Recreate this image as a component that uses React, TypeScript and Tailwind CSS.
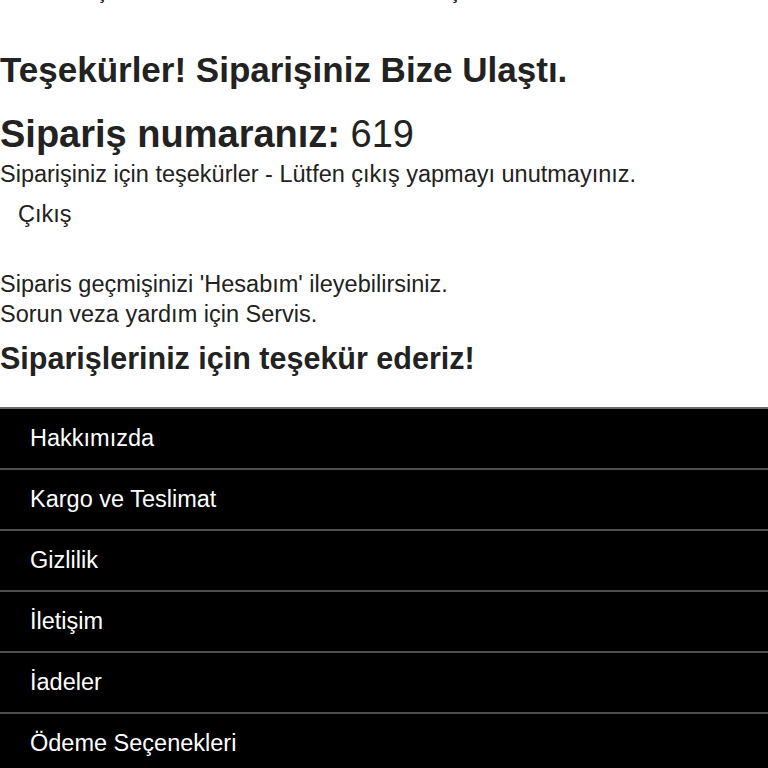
const links = ['Hakkımızda', 'Kargo ve Teslimat', 'Gizlilik', 'İletişim', 'İadeler', 'Ödeme Seçenekleri']

export default function App() {
  return (
    <div className="min-h-screen bg-white text-[#222] font-['Liberation_Sans',Arial,sans-serif]">
      {/* step bar, scrolled mostly out of view */}
      <div className="h-[7px] overflow-hidden">
        <div className="-mt-[17px] flex text-[18px] font-bold leading-[20px] text-[#222]">
          <span className="ml-[66px]">Giriş</span>
          <span className="ml-[308px]">Ödeş</span>
        </div>
      </div>

      <div className="pt-[43px]">
        <h1 className="text-[35px] font-bold leading-[40px]">Teşekürler! Siparişiniz Bize Ulaştı.</h1>

        <p className="mt-[22px] text-[38px] leading-[44px]">
          <span className="font-bold">Sipariş numaranız:</span> 619
        </p>
        <p className="mt-[4px] text-[23.5px] leading-[28px]">Siparişiniz için teşekürler - Lütfen çıkış yapmayı unutmayınız.</p>

        <button type="button" className="mt-[12px] ml-[18px] text-[23.5px] leading-[28px]">
          Çıkış
        </button>

        <div className="mt-[40px] text-[23.5px] leading-[30px]">
          <p>Siparis geçmişinizi 'Hesabım' ileyebilirsiniz.</p>
          <p>Sorun veza yardım için Servis.</p>
        </div>
        <h2 className="mt-[11px] text-[30.5px] font-bold leading-[36px]">Siparişleriniz için teşekür ederiz!</h2>
      </div>

      <footer className="mt-[31px] bg-black">
        {links.map((l, i) => (
          <div
            key={l}
            className={`flex h-[61px] items-center border-t-2 px-[30px] text-[23.5px] text-white ${i === 0 ? 'border-[#6a6a6a]' : 'border-[#4e4e4e]'}`}
          >
            {l}
          </div>
        ))}
      </footer>
    </div>
  )
}
